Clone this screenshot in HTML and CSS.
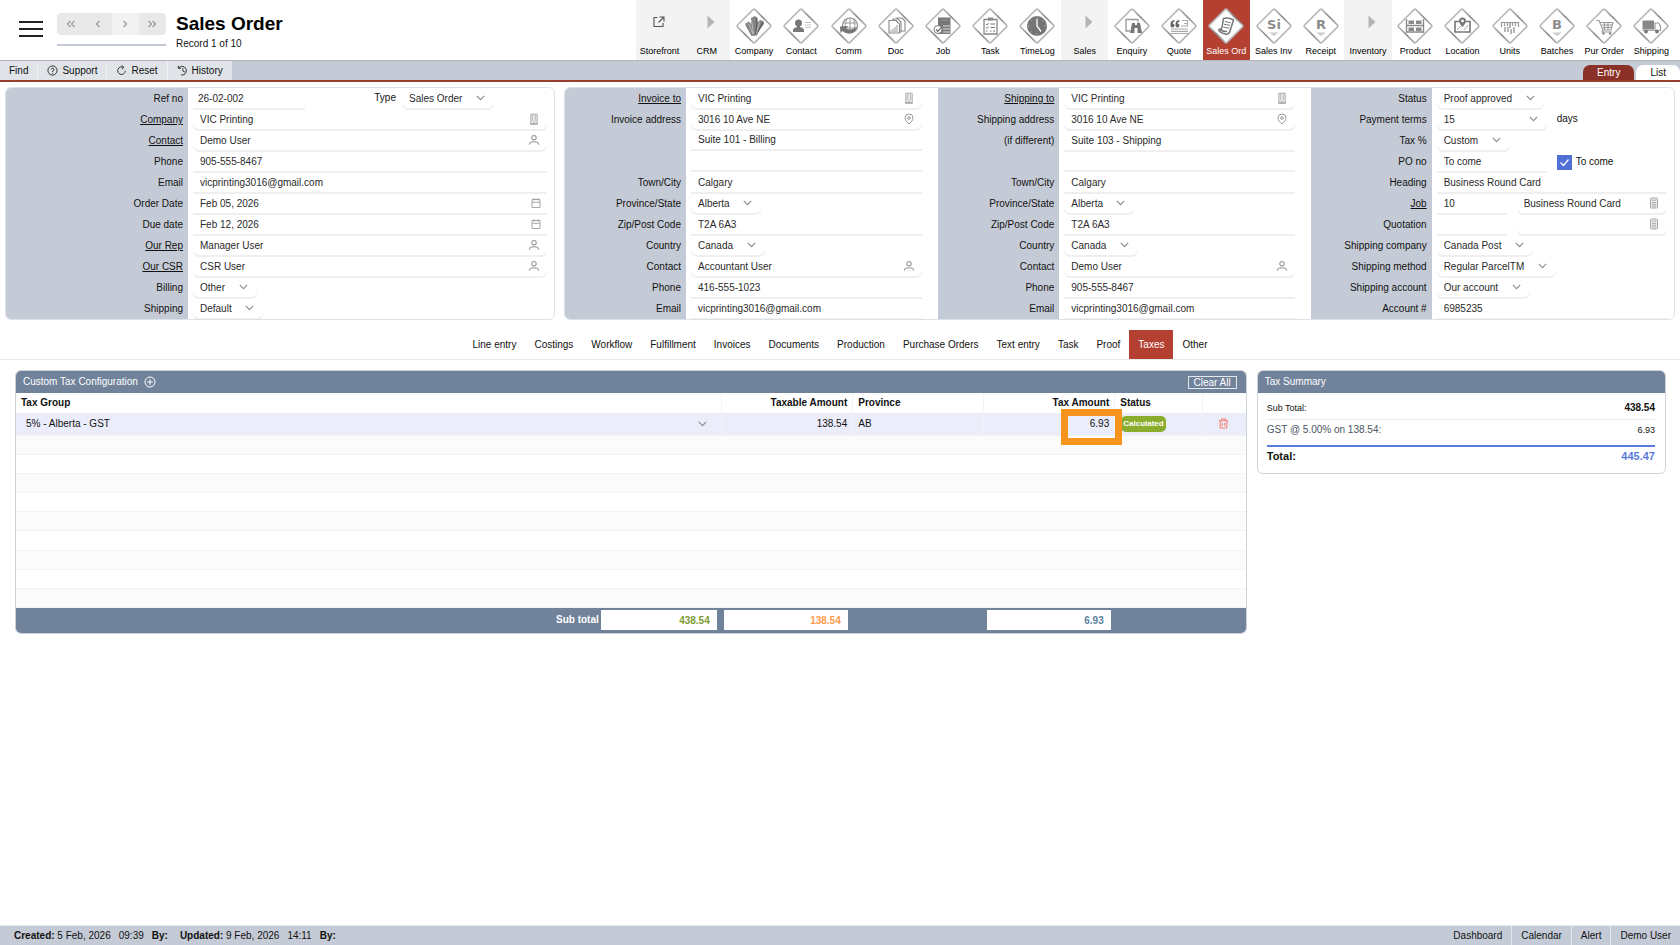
FILE: index.html
```html
<!DOCTYPE html>
<html lang="en">
<head>
<meta charset="utf-8">
<title>Sales Order</title>
<link rel="stylesheet" href="styles.css">
</head>
<body>
<svg class="defs" aria-hidden="true">
  <defs>
    <linearGradient id="edge" x1="0" y1="0" x2="1" y2="1">
      <stop offset="0" stop-color="#cfcfcf"/><stop offset=".3" stop-color="#b4b4b4"/><stop offset=".5" stop-color="#8a8a8a"/><stop offset=".75" stop-color="#b4b4b4"/><stop offset="1" stop-color="#d2d2d2"/>
    </linearGradient>
    <symbol id="diamond" viewBox="0 0 36 36"><path d="M17 1.600Q18 .8 19 1.600L34.400 17Q35.200 18 34.400 19L19 34.400Q18 35.200 17 34.400L1.600 19Q.8 18 1.600 17Z" fill="#fff" stroke="url(#edge)" stroke-width="1.700"/></symbol>
    <symbol id="chev" viewBox="0 0 9 6"><path d="M.8 .8L4.500 4.600L8.200 .8" fill="none" stroke="#8b8b8b" stroke-width="1.100"/></symbol>
    <symbol id="person" viewBox="0 0 12 12"><g fill="none" stroke="#999" stroke-width="1.100"><circle cx="6" cy="3.700" r="2.200"/><path d="M1.300 10.600C1.500 6.800 10.500 6.800 10.700 10.600"/></g></symbol>
    <symbol id="building" viewBox="0 0 12 12"><path d="M2.800 1.200h6.400v9.800h-6.400z" fill="#ececec" stroke="#a5a5a5" stroke-width=".9"/><path d="M4 3h1.200M6.800 3H8M4 5h1.200M6.800 5H8M4 7h1.200M6.800 7H8M5.300 9.300h1.400M2 11h8" stroke="#999"/></symbol>
    <symbol id="pin" viewBox="0 0 12 12"><g fill="none" stroke="#999"><path d="M6 11C3.500 8.800 2 7 2 5A4 4 0 0 1 10 5C10 7 8.500 8.800 6 11Z"/><circle cx="6" cy="5" r="1.300"/></g></symbol>
    <symbol id="cal" viewBox="0 0 12 12"><path d="M2 2.500h8v8H2zM2 5.300h8M4 1v2.500M8 1v2.500" fill="none" stroke="#a5a5a5"/></symbol>
    <symbol id="calc" viewBox="0 0 12 12"><rect x="2.500" y="1" width="7" height="10" rx="1" fill="#ececec" stroke="#a5a5a5"/><path d="M4 3.200h4M4 5.500h4M4 7.300h4M4 9.100h4" stroke="#a5a5a5" stroke-width=".9"/></symbol>
  </defs>
</svg>

<header class="top">
  <div class="brand">
    <button class="menu" aria-label="Menu"><svg width="26" height="18" viewBox="0 0 26 18"><path d="M1 2h24M1 9h24M1 16h24" stroke="#222" stroke-width="2"/></svg></button>
    <div class="pager">
      <div class="pager-buttons">
        <button aria-label="First record"><svg width="10" height="8" viewBox="0 0 10 8"><path d="M4.500 1L1.500 4L4.500 7M8.500 1L5.500 4L8.500 7"/></svg></button>
        <button aria-label="Previous record"><svg width="10" height="8" viewBox="0 0 10 8"><path d="M6.500 1L3.500 4L6.500 7"/></svg></button>
        <button class="off" aria-label="Next record"><svg width="10" height="8" viewBox="0 0 10 8"><path d="M3.500 1L6.500 4L3.500 7"/></svg></button>
        <button aria-label="Last record"><svg width="10" height="8" viewBox="0 0 10 8"><path d="M1.500 1L4.500 4L1.500 7M5.500 1L8.500 4L5.500 7"/></svg></button>
      </div>
      <div class="pager-line"></div>
    </div>
    <div class="heading"><h1>Sales Order</h1><p>Record 1 of 10</p></div>
  </div>
  <nav class="modules">
    <a class="group" href="#"><svg class="small" viewBox="0 0 36 36"><path d="M15.500 13.500h-3.500v9h9V19M17.500 13h4.500v4.500M21.500 13.500L16.500 18.500" fill="none" stroke="#555" stroke-width="1.100"/></svg>Storefront</a>
    <a class="group" href="#"><svg class="small" viewBox="0 0 36 36"><path d="M18.500 11.500l7 6.500l-7 6.500z" fill="#b5b5b5"/></svg>CRM</a>
    <a href="#"><svg viewBox="0 0 36 36"><use href="#diamond"/><path d="M15.500 28L9.500 17.500V15.500L13 13.500L15 16V10L19 8L21.500 10V14.500L24 12L27.500 13L28 16L23.500 22L21 27.500Z" fill="#858585"/><path d="M15.500 12L17.500 26M12.500 15.500L17 26M23.500 14L20 26" stroke="#ddd" stroke-width=".6"/><path d="M20.500 10L21 15L19.500 26M27 14L22 24" stroke="#555" fill="none"/></svg>Company</a>
    <a href="#"><svg viewBox="0 0 36 36"><use href="#diamond"/><circle cx="15.500" cy="15" r="3.500" fill="#777"/><path d="M10 24v-2.500q1-2 4-2.500v-2h3v2q3 .5 4 2.500V24z" fill="#777"/><path d="M22 14.500h6M22 17h6M22 19.300h6" stroke="#c4c4c4"/></svg>Contact</a>
    <a href="#"><svg viewBox="0 0 36 36"><use href="#diamond"/><circle cx="19" cy="17.500" r="7.500" fill="#fff" stroke="#888" stroke-width="1.200"/><path d="M12 15h14M12 20h14M19 10v15M15.500 11q-3 6.500 0 13M22.500 11q3 6.500 0 13" stroke="#999" fill="none"/><path d="M9 18.500l8.500-.5l-2.500 2.500q5.500 2.500 11-1.500q-2 6-8 6.500q-4 0-6.500-2.500L9.500 25z" fill="#777"/></svg>Comm</a>
    <a href="#"><svg viewBox="0 0 36 36"><use href="#diamond"/><g fill="#fff" stroke="#888" stroke-width="1.100"><path d="M19 10h5l3 3v10h-8z"/><path d="M15 11h5l3 3v10h-8z"/><path d="M11 12.500h7l3.500 3.500v9H11z"/></g><path d="M13 24v-2M15 24v-3.500M17 24v-5M19 24v-7" stroke="#aaa" stroke-width="1.200"/></svg>Doc</a>
    <a href="#"><svg viewBox="0 0 36 36"><use href="#diamond"/><path d="M13 9.500h12.500V26H13z" fill="#777"/><path d="M15.500 12h8" stroke="#999"/><path d="M18 18h7M18 21h7M18 24h7" stroke="#e4e4e4"/><circle cx="13" cy="21.500" r="4" fill="#fff" stroke="#777"/><path d="M11 21.500l1.800 1.800l3-3.500" stroke="#666" stroke-width="1.300" fill="none"/></svg>Job</a>
    <a href="#"><svg viewBox="0 0 36 36"><use href="#diamond"/><path d="M12 11.500h13V26H12z" fill="#fff" stroke="#888" stroke-width="1.300"/><path d="M16 9.500h5v3h-5z" fill="#888"/><path d="M14 16l1 1l1.500-2M14 19.500l1 1l1.500-2M14 23h1.500M18.500 16h4.500M18.500 19.500h4.500M18 23h1.500M21 23h2" stroke="#777" fill="none"/></svg>Task</a>
    <a href="#"><svg viewBox="0 0 36 36"><use href="#diamond"/><circle cx="18" cy="18" r="10" fill="#757575"/><path d="M18 11v7l4 5.500" stroke="#fff" stroke-width="1.300" fill="none"/><path d="M18 9v1.500M18 25.500V27M9 18h1.500M25.500 18H27M11.500 11.500l1 1M24.500 11.500l-1 1M11.500 24.500l1-1" stroke="#bbb"/></svg>TimeLog</a>
    <a class="group" href="#"><svg class="small" viewBox="0 0 36 36"><path d="M18.500 11.500l7 6.500l-7 6.500z" fill="#b5b5b5"/></svg>Sales</a>
    <a href="#"><svg viewBox="0 0 36 36"><use href="#diamond"/><path d="M16 23h-4V11.500h12v3" fill="none" stroke="#999" stroke-width="1.300"/><path d="M18 15h3v2h2v-2h3l2 10h-4.500v-5h-3v5H16z" fill="#777"/></svg>Enquiry</a>
    <a href="#"><svg viewBox="0 0 36 36"><use href="#diamond"/><path d="M9.500 17q-.5-4.500 4-5v1.500q-2 .5-1.800 2a2 2 0 1 1-2.200 1.500zM14.500 17q-.5-4.500 4-5v1.500q-2 .5-1.800 2a2 2 0 1 1-2.200 1.500z" fill="#666"/><path d="M21 12.500h5.500V18H20M23 15.500h3.500M10 21h17M10 23.300h17M10 25.500h17" fill="none" stroke="#aaa" stroke-width="1.200"/></svg>Quote</a>
    <a class="active" href="#"><svg viewBox="0 0 36 36"><use href="#diamond"/><path d="M15.500 10.500q5-1.500 10 1.500l-3.500 11q-1 3.500-4 3.300q-4-1-6.500-3q-1.500-2 .5-2.300q2 .5 2-2z" fill="#fff" stroke="#777" stroke-width="1.500"/><path d="M12 21.500q4 2.500 7 2" fill="none" stroke="#777" stroke-width="1.500"/><path d="M16.800 13.500l6 1.200M16 16.200l6 1.200M15.300 19l6 1.200" stroke="#777"/></svg>Sales Ord</a>
    <a href="#"><svg viewBox="0 0 36 36"><use href="#diamond"/><text x="18" y="21" class="glyph">Si</text><path d="M13 24.500h10l-5 3.500z" fill="#ccc"/></svg>Sales Inv</a>
    <a href="#"><svg viewBox="0 0 36 36"><use href="#diamond"/><text x="18" y="21" class="glyph">R</text><path d="M13 24.500h10l-5 3.500z" fill="#ccc"/></svg>Receipt</a>
    <a class="group" href="#"><svg class="small" viewBox="0 0 36 36"><path d="M18.500 11.500l7 6.500l-7 6.500z" fill="#b5b5b5"/></svg>Inventory</a>
    <a href="#"><svg viewBox="0 0 36 36"><use href="#diamond"/><path d="M9.500 11v14M26.500 11v14M9.500 17.500h17M9.500 24h17" stroke="#8a8a8a" stroke-width="1.400"/><path d="M11.500 12.500h5.500V16h-5.500zM19 12.500h5.500V16H19zM11.500 19.500h5.500V23h-5.500zM19 19.500h5.500V23H19z" fill="#8a8a8a"/></svg>Product</a>
    <a href="#"><svg viewBox="0 0 36 36"><use href="#diamond"/><path d="M15 13.500h-4V24h15V13.500h-4" fill="none" stroke="#777" stroke-width="1.600"/><path d="M13 22l4-4M20 22l4-5" stroke="#aaa"/><path d="M18.500 19q-3.500-4-3.500-6a3.500 3.500 0 0 1 7 0q0 2-3.500 6z" fill="#777"/><circle cx="18.500" cy="13" r="1.400" fill="#fff"/></svg>Location</a>
    <a href="#"><svg viewBox="0 0 36 36"><use href="#diamond"/><path d="M9.500 19v-4.500h17V19M12.500 15v3M15.500 15v3M20.500 15v3M23.500 15v3" fill="none" stroke="#999" stroke-width="1.200"/><path d="M13 19v5M16 19v5M18 15v5M19 21v5M22 19v6" stroke="#999" stroke-width="1.400"/></svg>Units</a>
    <a href="#"><svg viewBox="0 0 36 36"><use href="#diamond"/><text x="18" y="21" class="glyph">B</text><path d="M13 24.500h10l-5 3.500z" fill="#ccc"/></svg>Batches</a>
    <a href="#"><svg viewBox="0 0 36 36"><use href="#diamond"/><path d="M10 12.500h3l4 9.500h8l2-7.500H14M16 17h10M17 19.500h9M18.500 14.500v7M22 14.500v7M17 22l-1 2h10" fill="none" stroke="#999" stroke-width="1.100"/><circle cx="17.500" cy="25.500" r="1.200" fill="#888"/><circle cx="24" cy="25.500" r="1.200" fill="#888"/></svg>Pur Order</a>
    <a href="#"><svg viewBox="0 0 36 36"><use href="#diamond"/><path d="M9.500 12.500H21v9H9.500z" fill="#888"/><path d="M22 15h3.500l2 3v4.500H22z" fill="none" stroke="#999" stroke-width="1.200"/><path d="M9.500 22.500h18" stroke="#aaa"/><circle cx="13" cy="23.500" r="1.900" fill="#777"/><circle cx="24" cy="23.500" r="1.900" fill="#777"/></svg>Shipping</a>
  </nav>
</header>

<div class="toolbar">
  <button>Find</button>
  <button><svg width="11" height="11" viewBox="0 0 11 11"><circle cx="5.500" cy="5.500" r="4.600"/><path d="M4.200 4.300a1.400 1.400 0 1 1 1.300 1.700v.8M5.500 7.800v.8"/></svg>Support</button>
  <button><svg width="11" height="11" viewBox="0 0 11 11"><path d="M7.500 2.400A3.800 3.800 0 1 0 9.300 5.800M5.600 .4L7.900 2.400L5.800 4.400"/></svg>Reset</button>
  <button><svg width="11" height="11" viewBox="0 0 11 11"><path d="M1.800 2.800A4.300 4.300 0 1 1 4 9.800M1.300 .8V3.300H4M5.800 3.300V6l2 1"/></svg>History</button>
  <div class="views"><button class="on">Entry</button><button>List</button></div>
</div>

<main>
<section class="forms">
  <div class="card">
    <div class="col wide">
      <div class="row"><label for="ref">Ref no</label><div class="field"><input id="ref" class="w-ref" value="26-02-002"><label class="inline push" for="type">Type</label><span class="sel"><select id="type"><option>Sales Order</option></select><svg><use href="#chev"/></svg></span></div></div>
      <div class="row"><label for="company"><a href="#">Company</a></label><div class="field look"><input id="company" value="VIC Printing"><svg><use href="#building"/></svg></div></div>
      <div class="row"><label for="contact"><a href="#">Contact</a></label><div class="field look"><input id="contact" value="Demo User"><svg><use href="#person"/></svg></div></div>
      <div class="row"><label for="phone">Phone</label><div class="field"><input id="phone" value="905-555-8467"></div></div>
      <div class="row"><label for="email">Email</label><div class="field"><input id="email" value="vicprinting3016@gmail.com"></div></div>
      <div class="row"><label for="odate">Order Date</label><div class="field icon"><input id="odate" value="Feb 05, 2026"><svg><use href="#cal"/></svg></div></div>
      <div class="row"><label for="ddate">Due date</label><div class="field icon"><input id="ddate" value="Feb 12, 2026"><svg><use href="#cal"/></svg></div></div>
      <div class="row"><label for="rep"><a href="#">Our Rep</a></label><div class="field look"><input id="rep" value="Manager User"><svg><use href="#person"/></svg></div></div>
      <div class="row"><label for="csr"><a href="#">Our CSR</a></label><div class="field look"><input id="csr" value="CSR User"><svg><use href="#person"/></svg></div></div>
      <div class="row"><label for="billing">Billing</label><div class="field"><span class="sel"><select id="billing"><option>Other</option></select><svg><use href="#chev"/></svg></span></div></div>
      <div class="row"><label for="shipping">Shipping</label><div class="field"><span class="sel"><select id="shipping"><option>Default</option></select><svg><use href="#chev"/></svg></span></div></div>
    </div>
  </div>

  <div class="card three">
    <div class="col">
      <div class="row"><label for="i1"><a href="#">Invoice to</a></label><div class="field look"><input id="i1" value="VIC Printing"><svg><use href="#building"/></svg></div></div>
      <div class="row"><label for="i2">Invoice address</label><div class="field look"><input id="i2" value="3016 10 Ave NE"><svg><use href="#pin"/></svg></div></div>
      <div class="row"><span class="blank"></span><div class="field"><input aria-label="Invoice address line 2" value="Suite 101 - Billing"></div></div>
      <div class="row"><span class="blank"></span><div class="field"><input aria-label="Invoice address line 3"></div></div>
      <div class="row"><label for="i5">Town/City</label><div class="field"><input id="i5" value="Calgary"></div></div>
      <div class="row"><label for="i6">Province/State</label><div class="field"><span class="sel"><select id="i6"><option>Alberta</option></select><svg><use href="#chev"/></svg></span></div></div>
      <div class="row"><label for="i7">Zip/Post Code</label><div class="field"><input id="i7" value="T2A 6A3"></div></div>
      <div class="row"><label for="i8">Country</label><div class="field"><span class="sel"><select id="i8"><option>Canada</option></select><svg><use href="#chev"/></svg></span></div></div>
      <div class="row"><label for="i9">Contact</label><div class="field look"><input id="i9" value="Accountant User"><svg><use href="#person"/></svg></div></div>
      <div class="row"><label for="i10">Phone</label><div class="field"><input id="i10" value="416-555-1023"></div></div>
      <div class="row"><label for="i11">Email</label><div class="field"><input id="i11" value="vicprinting3016@gmail.com"></div></div>
    </div>
    <div class="col">
      <div class="row"><label for="s1"><a href="#">Shipping to</a></label><div class="field look"><input id="s1" value="VIC Printing"><svg><use href="#building"/></svg></div></div>
      <div class="row"><label for="s2">Shipping address</label><div class="field look"><input id="s2" value="3016 10 Ave NE"><svg><use href="#pin"/></svg></div></div>
      <div class="row"><label for="s3">(if different)</label><div class="field"><input id="s3" value="Suite 103 - Shipping"></div></div>
      <div class="row"><span class="blank"></span><div class="field"><input aria-label="Shipping address line 3"></div></div>
      <div class="row"><label for="s5">Town/City</label><div class="field"><input id="s5" value="Calgary"></div></div>
      <div class="row"><label for="s6">Province/State</label><div class="field"><span class="sel"><select id="s6"><option>Alberta</option></select><svg><use href="#chev"/></svg></span></div></div>
      <div class="row"><label for="s7">Zip/Post Code</label><div class="field"><input id="s7" value="T2A 6A3"></div></div>
      <div class="row"><label for="s8">Country</label><div class="field"><span class="sel"><select id="s8"><option>Canada</option></select><svg><use href="#chev"/></svg></span></div></div>
      <div class="row"><label for="s9">Contact</label><div class="field look"><input id="s9" value="Demo User"><svg><use href="#person"/></svg></div></div>
      <div class="row"><label for="s10">Phone</label><div class="field"><input id="s10" value="905-555-8467"></div></div>
      <div class="row"><label for="s11">Email</label><div class="field"><input id="s11" value="vicprinting3016@gmail.com"></div></div>
    </div>
    <div class="col last">
      <div class="row"><label for="o1">Status</label><div class="field"><span class="sel"><select id="o1"><option>Proof approved</option></select><svg><use href="#chev"/></svg></span></div></div>
      <div class="row"><label for="o2">Payment terms</label><div class="field"><span class="sel w-terms"><select id="o2"><option>15</option></select><svg><use href="#chev"/></svg></span><span class="inline">days</span></div></div>
      <div class="row"><label for="o3">Tax %</label><div class="field"><span class="sel"><select id="o3"><option>Custom</option></select><svg><use href="#chev"/></svg></span></div></div>
      <div class="row"><label for="o4">PO no</label><div class="field"><input id="o4" class="w-terms" value="To come"><label class="inline check"><input type="checkbox" checked><svg viewBox="0 0 15 15"><path d="M3.500 7.500L6.500 10.500L11.500 4.500" fill="none" stroke="#fff" stroke-width="1.200"/></svg>To come</label></div></div>
      <div class="row"><label for="o5">Heading</label><div class="field"><input id="o5" value="Business Round Card"></div></div>
      <div class="row"><label for="o6"><a href="#">Job</a></label><div class="field pair"><input id="o6" class="w-no" value="10"><span class="field look"><input aria-label="Job name" value="Business Round Card"><svg><use href="#calc"/></svg></span></div></div>
      <div class="row"><label for="o7">Quotation</label><div class="field pair"><input id="o7" class="w-no"><span class="field look"><input aria-label="Quotation name"><svg><use href="#calc"/></svg></span></div></div>
      <div class="row"><label for="o8">Shipping company</label><div class="field"><span class="sel"><select id="o8"><option>Canada Post</option></select><svg><use href="#chev"/></svg></span></div></div>
      <div class="row"><label for="o9">Shipping method</label><div class="field"><span class="sel"><select id="o9"><option>Regular ParcelTM</option></select><svg><use href="#chev"/></svg></span></div></div>
      <div class="row"><label for="o10">Shipping account</label><div class="field"><span class="sel"><select id="o10"><option>Our account</option></select><svg><use href="#chev"/></svg></span></div></div>
      <div class="row"><label for="o11">Account #</label><div class="field"><input id="o11" value="6985235"></div></div>
    </div>
  </div>
</section>

<nav class="tabs">
  <a href="#">Line entry</a><a href="#">Costings</a><a href="#">Workflow</a><a href="#">Fulfillment</a><a href="#">Invoices</a><a href="#">Documents</a><a href="#">Production</a><a href="#">Purchase Orders</a><a href="#">Text entry</a><a href="#">Task</a><a href="#">Proof</a><a class="on" href="#">Taxes</a><a href="#">Other</a>
</nav>

<section class="taxes">
  <div class="panel">
    <div class="panel-head"><h2>Custom Tax Configuration</h2><button class="add" aria-label="Add tax"><svg width="12" height="12" viewBox="0 0 12 12"><circle cx="6" cy="6" r="5"/><path d="M6 3.200v5.600M3.200 6h5.600"/></svg></button><button class="clear">Clear All</button></div>
    <table class="grid">
      <colgroup><col><col class="c-taxable"><col class="c-taxable"><col class="c-taxable"><col class="c-status"><col class="c-del"></colgroup>
      <thead><tr><th>Tax Group</th><th class="num">Taxable Amount</th><th>Province</th><th class="num">Tax Amount</th><th>Status</th><th></th></tr></thead>
      <tbody>
        <tr class="data">
          <td><span class="sel group-sel"><select aria-label="Tax group"><option>5% - Alberta - GST</option></select><svg><use href="#chev"/></svg></span></td>
          <td class="num">138.54</td><td>AB</td><td class="num marked">6.93<span class="mark"></span></td>
          <td><span class="badge">Calculated</span></td>
          <td class="del"><button aria-label="Delete"><svg width="11" height="11" viewBox="0 0 11 11"><path d="M.8 2.800h9.400M3.500 2.600V.9h4v1.700M2 3l.3 7h6.400L9 3M4.200 5v3M6.800 5v3" fill="none" stroke="#f4776b"/></svg></button></td>
        </tr>
        <tr class="odd"><td colspan="6"></td></tr><tr><td colspan="6"></td></tr><tr class="odd"><td colspan="6"></td></tr><tr><td colspan="6"></td></tr><tr class="odd"><td colspan="6"></td></tr><tr><td colspan="6"></td></tr><tr class="odd"><td colspan="6"></td></tr><tr><td colspan="6"></td></tr><tr class="odd"><td colspan="6"></td></tr>
      </tbody>
    </table>
    <div class="totals">
      <div class="t-first"><label for="sub">Sub total</label><input id="sub" class="green" value="438.54"></div>
      <input class="orange" aria-label="Taxable total" value="138.54">
      <input class="blue" aria-label="Tax total" value="6.93">
    </div>
  </div>

  <aside class="panel">
    <div class="panel-head"><h2>Tax Summary</h2></div>
    <dl class="summary">
      <div class="s-sub"><dt>Sub Total:</dt><dd>438.54</dd></div>
      <div class="s-tax"><dt>GST @ 5.00% on 138.54:</dt><dd>6.93</dd></div>
      <div class="s-total"><dt>Total:</dt><dd>445.47</dd></div>
    </dl>
  </aside>
</section>
</main>

<footer class="status">
  <p><b>Created:</b> 5 Feb, 2026</p><p>09:39</p><p><b>By:</b></p><p class="upd"><b>Updated:</b> 9 Feb, 2026</p><p>14:11</p><p><b>By:</b></p>
  <nav><a href="#">Dashboard</a><a href="#">Calendar</a><a href="#">Alert</a><a href="#">Demo User</a></nav>
</footer>
</body>
</html>
```
FILE: styles.css
```css
* { box-sizing: border-box; }
body {
  margin: 0;
  min-height: 100vh;
  display: flex;
  flex-direction: column;
  background: #fff;
  color: #111;
  font: 10px/14px "Liberation Sans", Arial, sans-serif;
}
button, input, select { font: inherit; color: inherit; border: 0; padding: 0; margin: 0; background: none; border-radius: 0; min-width: 0; }
a { color: inherit; text-decoration: none; }
h1, h2, p, dl, dd { margin: 0; }
.defs { position: absolute; width: 0; height: 0; }
main { flex: 1; }

/* header */
.top { display: grid; grid-template-columns: 636fr 1044fr; height: 61px; border-bottom: 1px solid #b4b4b6; }
.brand { display: flex; align-items: flex-start; padding: 13px 0 0 18px; }
.menu { height: 18px; margin: 7px 13px 0 0; }
.menu svg { display: block; }
.pager { width: 109px; }
.pager-buttons { display: flex; height: 22px; border-radius: 4px; overflow: hidden; }
.pager-buttons button { flex: 1; background: #e9e9e9; line-height: 0; }
.pager-buttons .off { background: #f2f2f2; }
.pager-buttons path { fill: none; stroke: #999; stroke-width: 1.2; }
.pager-line { height: 2px; margin-top: 9px; background: #c5cbd6; }
.heading { margin-left: 10px; }
.heading h1 { font-size: 19px; line-height: 22px; color: #000; }
.heading p { margin-top: 2px; }
.modules { display: grid; grid-template-columns: repeat(22, 1fr); padding-right: 5px; }
.modules a { display: flex; flex-direction: column; align-items: center; padding-top: 8px; font-size: 9px; line-height: 14px; white-space: nowrap; color: #000; }
.modules svg { width: 36px; height: 36px; flex: none; }
.modules .small { margin-top: -4px; margin-bottom: 4px; }
.modules .group { background: #f3f3f3; }
.modules .active { background: #b34030; color: #fff; }
.glyph { font: bold 13px "DejaVu Sans", sans-serif; fill: #8c8c8c; text-anchor: middle; }

/* toolbar */
.toolbar { display: flex; gap: 1px; height: 21px; background: #c5cbd6; border-bottom: 2px solid #97402f; }
.toolbar > button { display: flex; align-items: center; gap: 4px; padding: 0 9px; background: #e0e4e9; box-shadow: 1px 0 0 #eef0f3; }
.toolbar > button:nth-child(4) { box-shadow: none; }
.toolbar svg { fill: none; stroke: #333; stroke-width: 1; }
.views { margin-left: auto; display: flex; gap: 2px; align-items: flex-end; }
.views button { height: 15px; padding: 0 14px; background: #fff; border-radius: 7px 7px 0 0; }
.views .on { background: #8b3026; color: #fff; }

/* record form */
.forms { display: grid; grid-template-columns: 550fr 1111fr; gap: 9px; padding: 5px 5px 0; }
.card { border: 1px solid #dde1e8; border-radius: 6px; overflow: hidden; }
.three { display: grid; grid-template-columns: 374fr 373fr 364fr; }
.row { display: grid; grid-template-columns: 121px 1fr; height: 21px; }
.wide .row { grid-template-columns: 182px 1fr; }
.row > label, .blank { background: #c5cbd6; text-align: right; padding-right: 5px; line-height: 22px; }
.row > label a { text-decoration: underline; }
.row > .field { margin: 0 16px 0 5px; }
.wide .row > .field, .last .row > .field { margin-right: 7px; }
.field { display: flex; position: relative; min-width: 0; color: #2a2a2a; }
.field input { flex: 1; width: 100%; padding: 0 24px 1px 7px; box-shadow: inset 0 -2px 0 #efeff0; }
.look input, .sel select { border-radius: 0 0 6px 6px; box-shadow: inset 0 -2px 0 #efeff0; }
.look > svg, .icon > svg { position: absolute; right: 7px; top: 4px; width: 12px; height: 12px; }
.icon > svg { right: 5px; }
.field .w-ref { flex: 0 0 112px; padding-left: 5px; }
.push { margin-left: auto; }
.push + .sel { margin: 0 53px 0 6px; }
.field .w-terms { flex: 0 0 110px; }
.field .w-no { flex: 0 0 70px; }
.pair { gap: 10px; }
.pair .look { flex: 1; }
.inline { line-height: 20px; color: #111; }
.w-terms + .inline { margin-left: 10px; }
.check { display: flex; align-items: center; gap: 4px; position: relative; }
.field .check input { appearance: none; flex: 0 0 15px; height: 15px; padding: 0; box-shadow: none; background: #5070d6; }
.check svg { position: absolute; left: 0; width: 15px; height: 15px; }
.sel { display: inline-flex; position: relative; }
.sel select { appearance: none; height: 100%; width: 100%; padding: 0 31px 1px 7px; }
.sel svg { position: absolute; right: 9px; top: 7px; width: 9px; height: 6px; pointer-events: none; }

/* section tabs */
.tabs { display: flex; justify-content: center; margin-top: 10px; border-bottom: 1px solid #e8e8e8; }
.tabs a { padding: 0 9px; line-height: 29px; color: #111; }
.tabs .on { background: #b34030; color: #fff; }

/* tax panels */
.taxes { display: grid; grid-template-columns: 1231fr 409fr; gap: 10px; align-items: start; padding: 10px 14px 0 15px; }
.panel { border: 1px solid #ccd3dc; border-radius: 6px; overflow: hidden; }
.panel-head { display: flex; align-items: center; height: 22px; padding: 0 9px 0 7px; background: #71829b; color: #fff; }
.panel-head h2 { font-size: 10px; font-weight: 400; }
.add { margin-left: 6px; height: 12px; }
.add svg { display: block; fill: none; stroke: #fff; }
.clear { margin-left: auto; padding: 0 5px; line-height: 11px; border: 1px solid #e4e8ed; }
.grid { width: 100%; height: 215px; border-collapse: collapse; table-layout: fixed; }
.c-taxable { width: 131px; }
.c-status { width: 88px; }
.c-del { width: 43px; }
.grid th, .grid td { padding: 0 5px; text-align: left; border-left: 1px solid #f3f3f5; }
.grid th { height: 20px; }
.grid tr > :first-child { border-left: 0; }
.grid td { height: 19px; border-bottom: 1px solid #f3f3f4; }
.grid .data td { height: 22px; background: #ebeefa; }
.grid .odd { background: #fbfbfb; }
.grid .num { text-align: right; }
.grid .data td:first-child { padding: 0; }
.group-sel { width: 100%; height: 20px; vertical-align: top; }
.group-sel select { padding: 0 33px 0 10px; box-shadow: none; }
.group-sel svg { right: 14px; }
.marked { position: relative; }
.mark { position: absolute; right: -8px; top: -4px; width: 61px; height: 36px; border: 7px solid #f7941d; z-index: 1; }
.badge { display: inline-block; padding: 0 2px; margin-left: 1px; border-radius: 5px; background: #8aad2d; color: #fff; font-size: 8px; line-height: 16px; font-weight: 700; vertical-align: middle; }
.grid .del { padding-left: 15px; }
.del button { display: block; }
.del svg { display: block; }
.totals { display: grid; grid-template-columns: 1fr 124px 263px; height: 25px; padding: 2px 135px 3px 0; background: #71829b; }
.totals input { width: 124px; height: 20px; padding: 0 7px; background: #fff; text-align: right; font-weight: 700; }
.t-first { display: flex; justify-content: flex-end; align-items: center; gap: 2px; margin-right: 7px; color: #fff; font-weight: 700; }
.totals .t-first input { width: 116px; }
.totals .blue { justify-self: end; }
.green { color: #7d9a33; }
.orange { color: #ff9a4a; }
.blue { color: #5b83a0; }

/* summary */
.summary { padding: 3px 10px 8px 9px; }
.summary div { display: flex; justify-content: space-between; align-items: center; }
.s-sub { height: 24px; font-size: 9px; border-bottom: 1px solid #ececec; }
.s-sub dd { font-size: 10px; font-weight: 700; }
.s-tax { height: 25px; padding-bottom: 6px; color: #4a5462; }
.s-tax dd { font-size: 9px; color: #111; }
.s-total { height: 20px; border-top: 2px solid #5b7bdc; font-size: 11px; font-weight: 700; }
.s-total dd { color: #5b7bdc; }

/* status bar */
.status { display: flex; align-items: stretch; height: 20px; padding-left: 14px; gap: 8px; background: #c5cbd6; border-top: 1px solid #e4e7ec; line-height: 20px; color: #111; }
.status .upd { margin-left: 4px; }
.status nav { margin-left: auto; display: flex; }
.status nav a { padding: 0 9px; border-left: 1px solid #e4e7ec; }
.status nav a:first-child { border-left: 0; }
```
